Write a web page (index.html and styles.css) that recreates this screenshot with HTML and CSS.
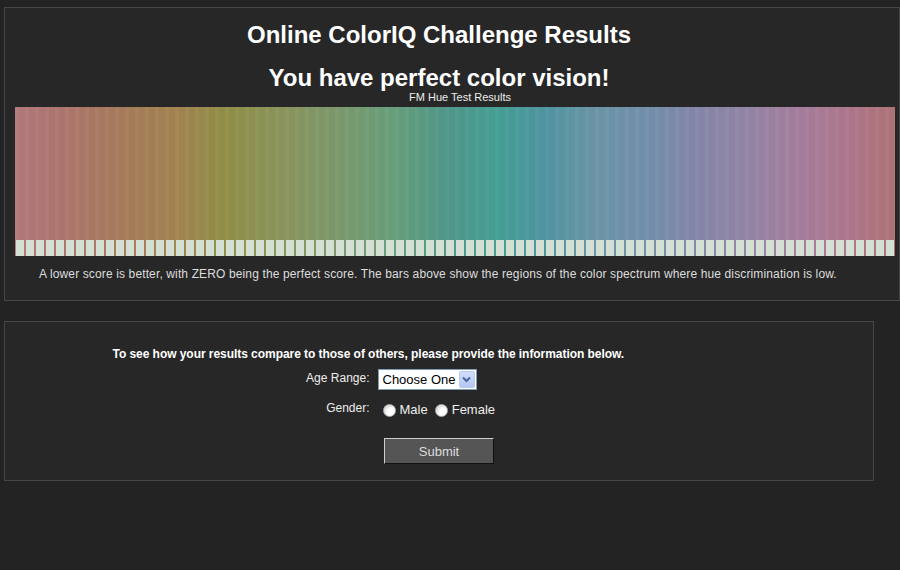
FILE: index.html
```html
<!DOCTYPE html>
<html lang="en">
<head>
    <meta charset="UTF-8">
    <title>Online ColorIQ Challenge Results</title>
    <link rel="stylesheet" href="styles.css">
</head>
<body>
    <div class="panel results">
        <div class="headings">
            <h1>Online ColorIQ Challenge Results</h1>
            <h2>You have perfect color vision!</h2>
        </div>
        <div class="caption">FM Hue Test Results</div>
        <div class="chart">
            <div class="spectrum"></div>
            <div class="caps"></div>
        </div>
        <p class="note">A lower score is better, with ZERO being the perfect score. The bars above show the regions of the color spectrum where hue discrimination is low.</p>
    </div>

    <div class="panel survey">
        <form class="form">
            <div class="intro">To see how your results compare to those of others, please provide the information below.</div>
            <div class="label">Age Range:</div>
            <div class="field">
                <span class="select-wrap">
                    <select name="age">
                        <option>Choose One</option>
                        <option>Under 20</option>
                        <option>20 - 29</option>
                        <option>30 - 39</option>
                        <option>40 - 49</option>
                        <option>50 +</option>
                    </select>
                    <span class="select-btn">
                        <svg width="9" height="7" viewBox="0 0 9 7"><path d="M1 1.5 L4.5 5 L8 1.5" fill="none" stroke="#4a64a0" stroke-width="2"/></svg>
                    </span>
                </span>
            </div>
            <div class="label gender">Gender:</div>
            <div class="field radios">
                <label><input type="radio" name="gender"> Male</label>
                <label><input type="radio" name="gender"> Female</label>
            </div>
        </form>
        <div class="actions">
            <button type="button" class="submit">Submit</button>
        </div>
    </div>
</body>
</html>
```

FILE: styles.css
```css
*{
    margin: 0;
    padding: 0;
    box-sizing: border-box;
}
body{
    background: #232323;
    padding: 7px 0 0 4px;
    font-family: "Liberation Sans", Arial, sans-serif;
    color: #eee;
}
.panel{
    background: #272727;
    border: 1px solid #464646;
}
.results{
    width: 896px;
    padding: 13px 0 19px;
}
.headings{
    text-align: center;
    padding-right: 26px;
    color: #fff;
}
h1{
    font-size: 24px;
    line-height: 28px;
}
h2{
    margin-top: 16px;
    font-size: 24px;
    line-height: 26px;
}
.caption{
    text-align: center;
    padding-left: 16px;
    font-size: 11px;
    line-height: 13px;
}
.chart{
    display: flex;
    flex-direction: column;
    width: 880px;
    height: 149px;
    margin: 3px 0 0 10px;
    background:
        repeating-linear-gradient(90deg, rgba(255,255,255,.025) 0 4px, rgba(0,0,0,.02) 4px 10px),
        linear-gradient(90deg,
            #b47a7c 0%, #ae7670 5%, #a87c5c 12%, #a48452 18%, #929048 24%,
            #8a9660 31%, #7c9a6e 37%, #68a07c 43%, #52988a 49%, #46a096 55%,
            #5096a2 60%, #6c96a8 66%, #7490ac 72%, #8488aa 77%, #9486a6 83%,
            #a480a0 88%, #ae7890 94%, #b07478 100%);
}
.spectrum{
    flex: 1;
}
.caps{
    height: 16px;
    background: repeating-linear-gradient(90deg, #d4e0d3 0 8px, transparent 8px 10px);
    background-position: 1px 0;
}
.note{
    margin: 11px 0 0 34px;
    font-size: 12px;
    line-height: 14px;
    letter-spacing: .13px;
    color: #ddd;
}
.survey{
    width: 870px;
    margin-top: 20px;
    padding: 25px 0 16px;
}
.form{
    display: grid;
    grid-template-columns: 257px 1fr;
    column-gap: 8px;
    width: 653px;
    margin: 0 auto;
    font-size: 12px;
    line-height: 14px;
}
.intro{
    grid-column: 1 / 3;
    font-weight: bold;
    letter-spacing: -.05px;
    color: #fff;
    margin-bottom: 8px;
}
.label{
    text-align: right;
    padding-top: 2px;
}
.label.gender{
    padding-top: 11px;
}
.select-wrap{
    position: relative;
    display: inline-block;
    width: 99px;
    height: 21px;
}
select{
    appearance: none;
    -webkit-appearance: none;
    width: 99px;
    height: 21px;
    border: 1px solid #7f9db9;
    border-radius: 0;
    background: #fff;
    color: #000;
    font-family: "Liberation Sans", Arial, sans-serif;
    font-size: 13px;
    padding: 0 0 0 4px;
    outline: none;
}
.select-btn{
    position: absolute;
    top: 2px;
    right: 2px;
    width: 16px;
    height: 17px;
    display: flex;
    align-items: center;
    justify-content: center;
    background: linear-gradient(#d2defc, #b4c8f6);
    border: 1px solid #b8c9ef;
    border-radius: 2px;
    pointer-events: none;
}
.radios{
    display: flex;
    align-items: center;
    padding: 13px 0 0 5px;
    font-size: 13px;
    color: #eee;
}
.radios label{
    display: flex;
    align-items: center;
    margin-right: 7px;
}
input[type=radio]{
    appearance: none;
    -webkit-appearance: none;
    width: 13px;
    height: 13px;
    margin-right: 4px;
    border-radius: 50%;
    border: 1px solid #b5b5b5;
    background: radial-gradient(circle at 65% 65%, #fff 0 35%, #e6e6e6 60%, #c8c8c8 100%);
}
.actions{
    text-align: center;
    margin-top: 21px;
}
.submit{
    width: 110px;
    height: 26px;
    background: #555;
    color: #ddd;
    font-family: "Liberation Sans", Arial, sans-serif;
    font-size: 13px;
    border: 1px solid;
    border-color: #cfcfcf #111 #111 #cfcfcf;
    cursor: pointer;
}
```
